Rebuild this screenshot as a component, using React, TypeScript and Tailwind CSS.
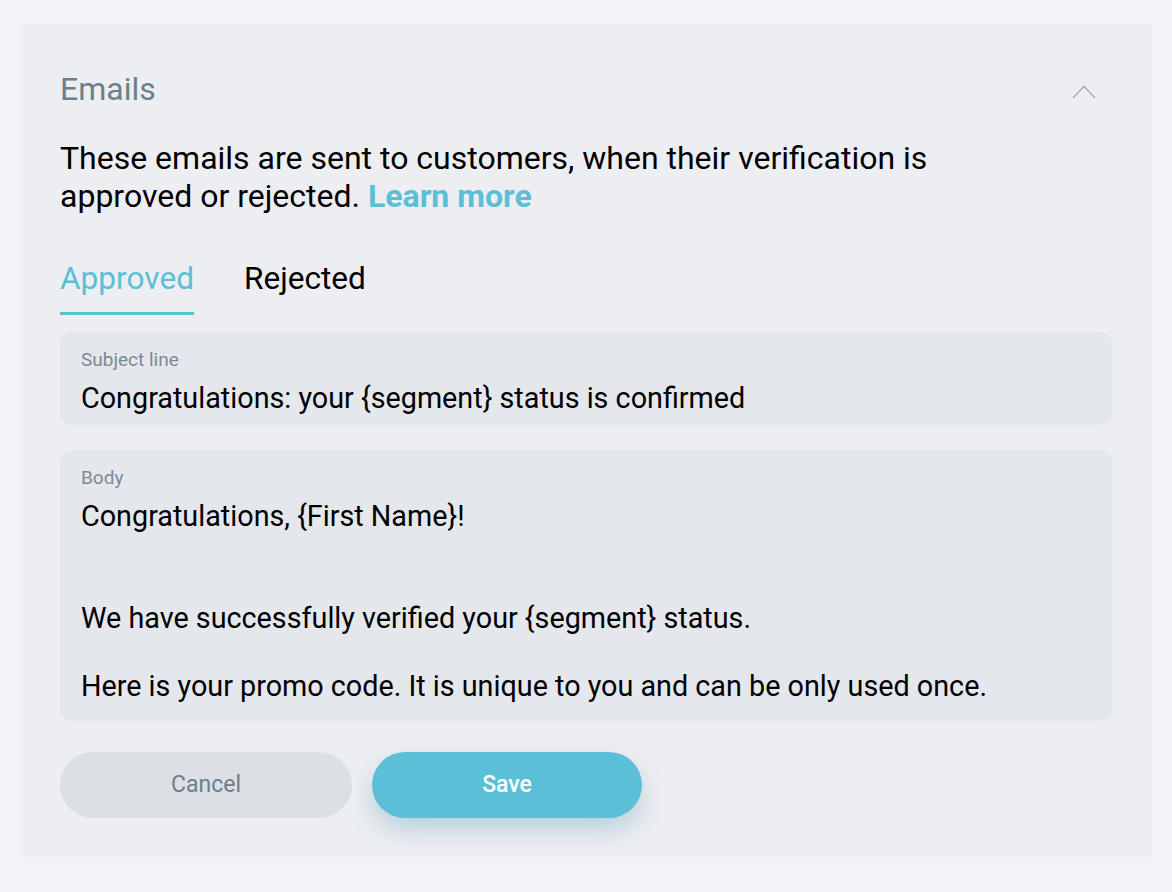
import { useState } from 'react'

const BODY = `Congratulations, {First Name}!


We have successfully verified your {segment} status.

Here is your promo code. It is unique to you and can be only used once.`

export default function App() {
  const [tab, setTab] = useState<'approved' | 'rejected'>('approved')

  return (
    <div className="min-h-screen bg-[#f1f3f7] px-[20px] pt-[24px] pb-[35px] font-['Roboto',sans-serif]">
      <div className="bg-[#edeef2] px-[40px] pt-[46px] pb-[39px]">
        {/* Header */}
        <div className="flex items-center justify-between">
          <h2 className="text-[32px] leading-[38px] text-[#6b7f8c]">Emails</h2>
          <button className="mt-[6px] mr-[16px] text-[#a9b1b8]">
            <svg width="24" height="14" viewBox="0 0 24 14" fill="none">
              <path d="M1 13L12 1.5L23 13" stroke="currentColor" strokeWidth="1.6" />
            </svg>
          </button>
        </div>

        <p className="mt-[31px] max-w-[900px] text-[32px] leading-[38px] text-black">
          These emails are sent to customers, when their verification is approved or rejected.{' '}
          <a href="#" className="font-bold text-[#5bbfd8]">
            Learn more
          </a>
        </p>

        {/* Tabs */}
        <div className="mt-[45px] flex gap-[50px]">
          <button
            onClick={() => setTab('approved')}
            className={`border-b-[3px] pb-[14px] text-[31.6px] leading-[38px] ${
              tab === 'approved' ? 'border-[#5bbfd8] text-[#5bbfd8]' : 'border-transparent text-black'
            }`}
          >
            Approved
          </button>
          <button
            onClick={() => setTab('rejected')}
            className={`border-b-[3px] pb-[14px] text-[31.6px] leading-[38px] ${
              tab === 'rejected' ? 'border-[#5bbfd8] text-[#5bbfd8]' : 'border-transparent text-black'
            }`}
          >
            Rejected
          </button>
        </div>

        {/* Subject */}
        <div className="mt-[17px] rounded-[12px] bg-[#e4e7ec] px-[21px] pt-[17px] pb-[10px]">
          <div className="text-[19px] leading-[22px] text-[#7b8a95]">Subject line</div>
          <div className="mt-[10px] text-[28.75px] leading-[34px] text-black">
            Congratulations: your {'{segment}'} status is confirmed
          </div>
        </div>

        {/* Body */}
        <div className="mt-[25px] rounded-[12px] bg-[#e4e7ec] px-[21px] pt-[17px] pb-[18px]">
          <div className="text-[19px] leading-[22px] text-[#7b8a95]">Body</div>
          <div className="mt-[10px] whitespace-pre-wrap text-[28.75px] leading-[34px] text-black">{BODY}</div>
        </div>

        {/* Actions */}
        <div className="mt-[31px] flex gap-[20px]">
          <button className="h-[66px] w-[292px] rounded-full bg-[#dcdfe3] text-[23px] text-[#6b7f8c]">
            Cancel
          </button>
          <button className="h-[66px] w-[270px] rounded-full bg-[#5bbfd8] text-[23px] font-medium text-white shadow-[0_12px_24px_rgba(70,140,165,0.3)]">
            Save
          </button>
        </div>
      </div>
    </div>
  )
}
